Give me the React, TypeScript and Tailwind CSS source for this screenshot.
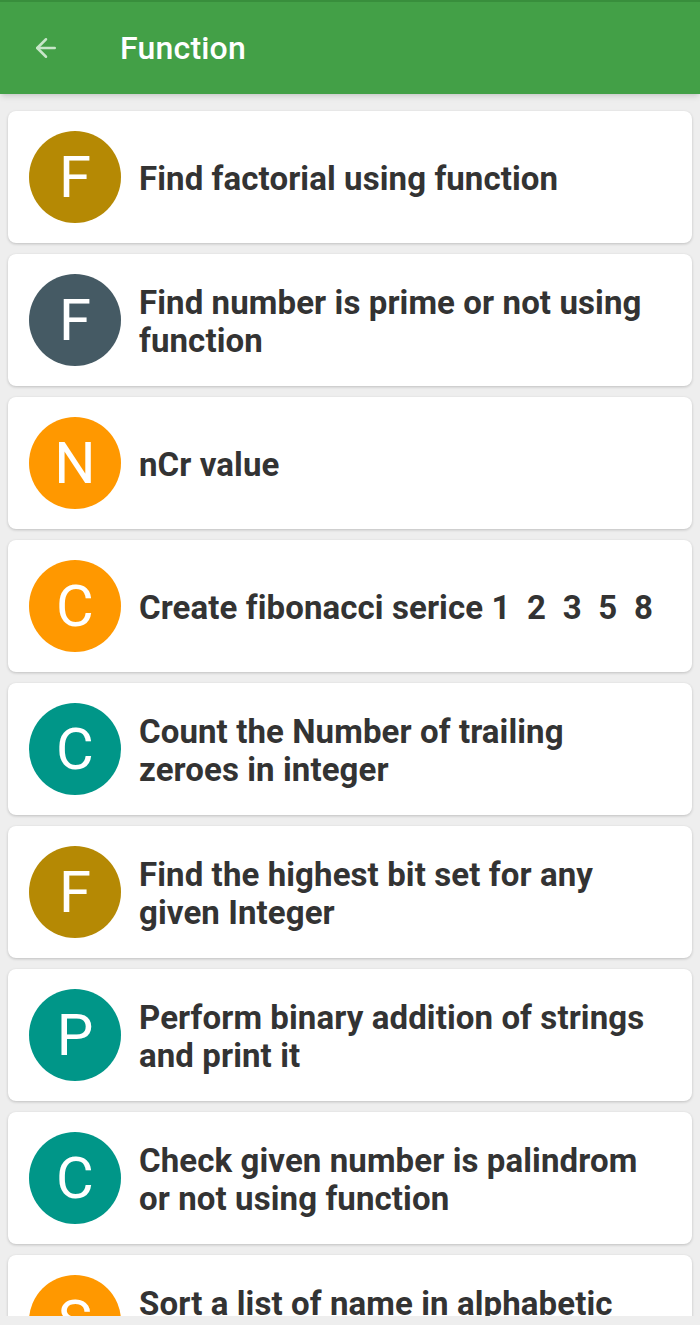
import { ArrowLeft } from 'lucide-react'

const items = [
  { title: 'Find factorial using function', color: 'bg-[#b58904]' },
  { title: 'Find number is prime or not using function', color: 'bg-[#455a64]' },
  { title: 'nCr value', color: 'bg-[#ff9800]' },
  { title: 'Create fibonacci serice 1  2  3  5  8', color: 'bg-[#ff9800]' },
  { title: 'Count the Number of trailing zeroes in integer', color: 'bg-[#009688]' },
  { title: 'Find the highest bit set for any given Integer', color: 'bg-[#b58904]' },
  { title: 'Perform binary addition of strings and print it', color: 'bg-[#009688]' },
  { title: 'Check given number is palindrom or not using function', color: 'bg-[#009688]' },
  { title: 'Sort a list of name in alphabetic order', color: 'bg-[#ff9800]' },
]

export default function App() {
  return (
    <div className="w-[700px] h-[1325px] bg-[#eeeeee] flex flex-col overflow-hidden font-['Roboto',sans-serif]">
      <div className="h-[94px] shrink-0 bg-[#43a047] border-t-2 border-[#388e3c] flex items-center shadow-md">
        <ArrowLeft className="w-[30px] h-[30px] text-[#c8e6c9] ml-[31px]" strokeWidth={2} />
        <h1 className="ml-[59px] text-[32px] font-medium text-white tracking-[0.2px]">Function</h1>
      </div>

      <div className="h-[1222px] overflow-hidden px-[8px] pt-[17px] flex flex-col gap-[11px]">
        {items.map((it, i) => (
          <div key={i} className="shrink-0 h-[132px] bg-white rounded-[8px] shadow-[0_1px_3px_rgba(0,0,0,0.2)] flex items-center pl-[21px] pr-[36px]">
            <div className={`w-[92px] h-[92px] shrink-0 rounded-full ${it.color} flex items-center justify-center text-white text-[58px] leading-none`}>
              {it.title[0].toUpperCase()}
            </div>
            <p className="ml-[18px] mt-[3px] text-[33px] leading-[38px] font-bold text-[#333333] tracking-[0.1px] whitespace-pre-wrap">{it.title}</p>
          </div>
        ))}
      </div>
    </div>
  )
}
